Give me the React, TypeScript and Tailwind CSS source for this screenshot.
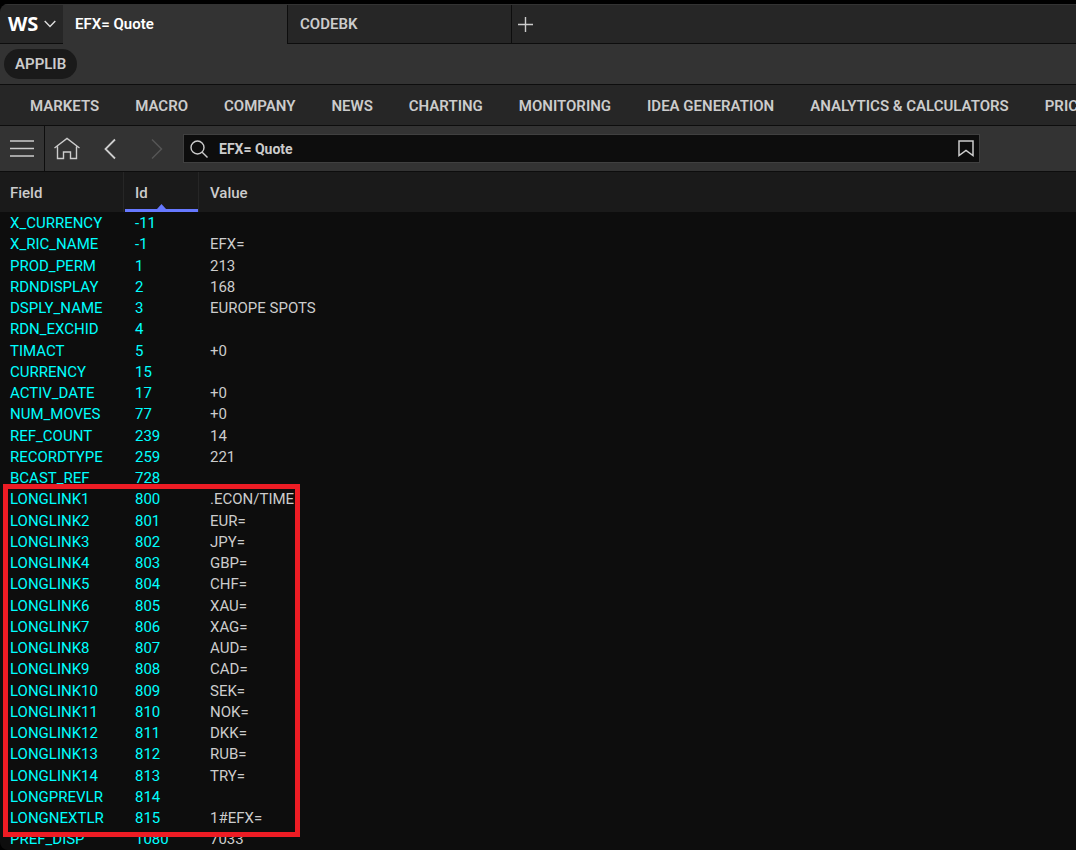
import React from 'react';

const tabs = ['EFX= Quote', 'CODEBK'];

const menuItems = [
  'MARKETS',
  'MACRO',
  'COMPANY',
  'NEWS',
  'CHARTING',
  'MONITORING',
  'IDEA GENERATION',
  'ANALYTICS & CALCULATORS',
  'PRICING',
];

const rows = [
  { field: 'X_CURRENCY', id: '-11', value: '' },
  { field: 'X_RIC_NAME', id: '-1', value: 'EFX=' },
  { field: 'PROD_PERM', id: '1', value: '213' },
  { field: 'RDNDISPLAY', id: '2', value: '168' },
  { field: 'DSPLY_NAME', id: '3', value: 'EUROPE SPOTS' },
  { field: 'RDN_EXCHID', id: '4', value: '' },
  { field: 'TIMACT', id: '5', value: '+0' },
  { field: 'CURRENCY', id: '15', value: '' },
  { field: 'ACTIV_DATE', id: '17', value: '+0' },
  { field: 'NUM_MOVES', id: '77', value: '+0' },
  { field: 'REF_COUNT', id: '239', value: '14' },
  { field: 'RECORDTYPE', id: '259', value: '221' },
  { field: 'BCAST_REF', id: '728', value: '' },
  { field: 'LONGLINK1', id: '800', value: '.ECON/TIME' },
  { field: 'LONGLINK2', id: '801', value: 'EUR=' },
  { field: 'LONGLINK3', id: '802', value: 'JPY=' },
  { field: 'LONGLINK4', id: '803', value: 'GBP=' },
  { field: 'LONGLINK5', id: '804', value: 'CHF=' },
  { field: 'LONGLINK6', id: '805', value: 'XAU=' },
  { field: 'LONGLINK7', id: '806', value: 'XAG=' },
  { field: 'LONGLINK8', id: '807', value: 'AUD=' },
  { field: 'LONGLINK9', id: '808', value: 'CAD=' },
  { field: 'LONGLINK10', id: '809', value: 'SEK=' },
  { field: 'LONGLINK11', id: '810', value: 'NOK=' },
  { field: 'LONGLINK12', id: '811', value: 'DKK=' },
  { field: 'LONGLINK13', id: '812', value: 'RUB=' },
  { field: 'LONGLINK14', id: '813', value: 'TRY=' },
  { field: 'LONGPREVLR', id: '814', value: '' },
  { field: 'LONGNEXTLR', id: '815', value: '1#EFX=' },
  { field: 'PREF_DISP', id: '1080', value: '7033' },
];

export default function App() {
  return (
    <div className="h-screen bg-black pt-1 font-['Roboto',sans-serif] text-[15px] leading-5 text-[#ccc]">
      <div className="flex h-full flex-col overflow-hidden rounded-l-lg bg-[#0d0d0d]">
        {/* Tabs */}
        <header className="flex h-10 shrink-0 border-t border-[#333] bg-[#262626]">
          <button
            type="button"
            aria-label="Workspace menu"
            className="flex w-[63px] items-center gap-1.5 border-b border-[#0d0d0d] pl-2 text-white"
          >
            <span className="font-['Open_Sans',sans-serif] text-xl font-bold">WS</span>
            <svg width="12" height="8" viewBox="0 0 12 8" fill="none" stroke="#ddd" strokeWidth="1.4">
              <path d="M.7 1 6 6.5 11.3 1" />
            </svg>
          </button>
          {tabs.map((tab, i) => (
            <button
              key={tab}
              type="button"
              className={
                i === 0
                  ? 'w-56 border-b border-[#333] bg-[#333] px-3 text-left font-semibold text-white'
                  : 'w-[225px] border-x border-b border-[#0d0d0d] px-3 text-left font-semibold'
              }
            >
              {tab}
            </button>
          ))}
          <button type="button" aria-label="New tab" className="flex flex-1 items-center border-b border-[#0d0d0d] pl-1.5">
            <svg width="15" height="15" viewBox="0 0 15 15" stroke="#ccc" strokeWidth="1.4">
              <path d="M7.5 0v15M0 7.5h15" />
            </svg>
          </button>
        </header>

        {/* App library */}
        <div className="flex h-[41px] shrink-0 items-center border-b border-[#0d0d0d] bg-[#333] px-1">
          <button type="button" className="h-[30px] rounded-full bg-[#1a1a1a] px-[11px] font-semibold">
            APPLIB
          </button>
        </div>

        {/* Menu */}
        <nav className="flex h-[41px] shrink-0 items-center gap-9 overflow-hidden border-b border-[#0d0d0d] bg-[#262626] pt-0.5 pl-[30px]">
          {menuItems.map((item) => (
            <a key={item} href="#" className="shrink-0 font-semibold whitespace-nowrap">
              {item}
            </a>
          ))}
        </nav>

        {/* Toolbar */}
        <div className="flex h-[46px] shrink-0 items-center border-b border-[#0d0d0d] bg-[#333] pr-24">
          <button
            type="button"
            aria-label="Menu"
            className="flex w-[45px] items-center justify-center self-stretch border-r border-[#0d0d0d]"
          >
            <svg width="24" height="17" viewBox="0 0 24 17" stroke="#ccc" strokeWidth="1.4">
              <path d="M0 1h24M0 8.5h24M0 16h24" />
            </svg>
          </button>
          <button type="button" aria-label="Home" className="ml-2">
            <svg width="28" height="24" viewBox="0 0 28 24" fill="none" stroke="#ccc" strokeWidth="1.4">
              <path d="M1.500 11 14 1.500 26.500 11M4.500 9.500V21.500h6V15h7v6.500h6v-12" />
            </svg>
          </button>
          <button type="button" aria-label="Back" className="ml-[23px]">
            <svg width="12" height="22" viewBox="0 0 12 22" fill="none" stroke="#ccc" strokeWidth="1.800">
              <path d="M11 1.500 1.500 11l9.500 9.500" />
            </svg>
          </button>
          <button type="button" aria-label="Forward" className="ml-[35px]">
            <svg width="12" height="22" viewBox="0 0 12 22" fill="none" stroke="#555" strokeWidth="1.500">
              <path d="m1 1.500 9.500 9.500L1 20.500" />
            </svg>
          </button>
          <div className="ml-5 flex h-[29px] flex-1 items-center border border-[#404040] bg-[#0d0d0d] pr-[5px] pl-1.5">
            <svg width="18" height="18" viewBox="0 0 18 18" fill="none" stroke="#ccc" strokeWidth="1.4">
              <circle cx="7.500" cy="7.500" r="6.500" />
              <path d="m12.200 12.200 5.300 5.300" />
            </svg>
            <input
              type="text"
              aria-label="Search"
              defaultValue="EFX= Quote"
              className="ml-[11px] min-w-0 flex-1 bg-transparent text-sm font-bold outline-none"
            />
            <button type="button" aria-label="Bookmark" className="shrink-0">
              <svg width="16" height="17" viewBox="0 0 16 17" fill="none" stroke="#ccc" strokeWidth="1.500">
                <path d="M1 1h14v14.500l-7-5-7 5z" />
              </svg>
            </button>
          </div>
        </div>

        {/* Quote fields */}
        <div className="relative min-h-0 flex-1">
          <table className="w-full table-fixed border-separate border-spacing-0 text-left">
            <thead>
              <tr className="h-10 bg-[#1a1a1a]">
                <th className="w-[124px] border-r border-[#262626] px-2.5 pt-0.5 pb-0 font-medium">Field</th>
                <th className="relative w-[75px] border-r border-[#262626] px-[11px] pt-0.5 pb-0 font-medium">
                  Id
                  <span className="absolute right-0 bottom-0 left-px flex flex-col items-center">
                    <svg width="9" height="5" viewBox="0 0 9 5" fill="#6678ff">
                      <path d="M4.500 0 9 5H0z" />
                    </svg>
                    <span className="h-[3px] w-full bg-[#6678ff]" />
                  </span>
                </th>
                <th className="px-[11px] pt-0.5 pb-0 font-medium">Value</th>
              </tr>
            </thead>
            <tbody>
              {rows.map((row) => (
                <tr key={row.id} className="h-[21px] nth-[4n+2]:h-[22px]">
                  <td className="px-2.5 py-0 text-[#00ffff]">{row.field}</td>
                  <td className="px-[11px] py-0 text-[#00ffff]">{row.id}</td>
                  <td className="px-[11px] py-0">{row.value}</td>
                </tr>
              ))}
            </tbody>
          </table>
          {/* LONGLINK highlight */}
          <div className="pointer-events-none absolute top-[312px] left-[3px] h-[353px] w-[297px] border-5 border-[#ed1c24]" />
        </div>
      </div>
    </div>
  );
}
